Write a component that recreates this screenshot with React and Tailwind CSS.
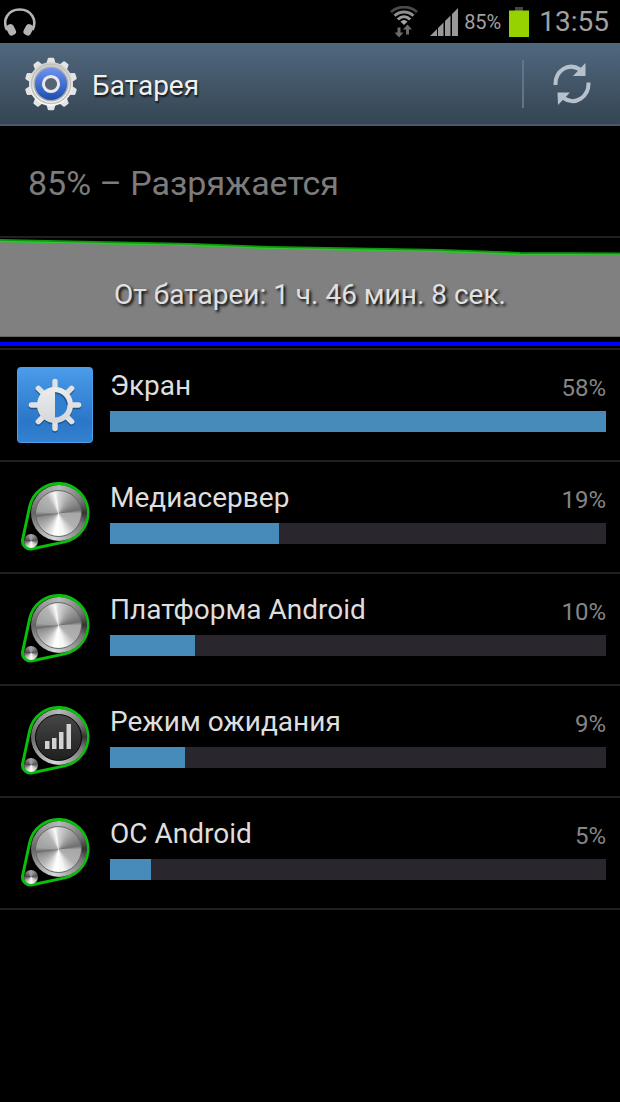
import React from 'react';

const usage = [
    { id: 'screen', name: 'Экран', percent: 58, icon: 'screen' },
    { id: 'media', name: 'Медиасервер', percent: 19.8, icon: 'knob' },
    { id: 'platform', name: 'Платформа Android', percent: 9.9, shown: 10, icon: 'knob' },
    { id: 'idle', name: 'Режим ожидания', percent: 8.8, shown: 9, icon: 'signal' },
    { id: 'os', name: 'ОС Android', percent: 4.8, shown: 5, icon: 'knob' },
];

const maxPercent = Math.max(...usage.map((item) => item.percent));

const HeadphonesIcon = () => (
    <svg className="w-8 h-8" viewBox="0 0 32 32" aria-hidden="true">
        <path d="M3 24C-2 14 4 3.500 15.700 3.500S33.500 14 28.500 24" fill="none" stroke="#b4b4b4" strokeWidth="2.600" />
        <rect x="3.300" y="18" width="7.800" height="11.500" rx="3.400" transform="rotate(-28 7.200 24)" fill="#b4b4b4" />
        <rect x="20.400" y="18" width="7.800" height="11.500" rx="3.400" transform="rotate(28 24.300 24)" fill="#b4b4b4" />
    </svg>
);

const WifiIcon = () => (
    <svg className="w-7 h-8" viewBox="0 0 28 32" aria-hidden="true">
        <g fill="none" strokeWidth="2.800">
            <path d="M1 6C8 -.500 20 -.500 27 6" stroke="#4a4a4a" />
            <path d="M4.500 9.800C10 4.700 18 4.700 23.500 9.800" stroke="#8e8e8e" />
            <path d="M7.800 13.500C11.500 9.800 16.500 9.800 20.200 13.500" stroke="#9c9c9c" />
        </g>
        <path d="M10.500 15.500Q14 12.500 17.500 15.500L14 19Z" fill="#a6a6a6" />
        <path d="M7.500 21.500h3v5h3l-4.500 5-4.500-5h3zM16 28.500v-5h-3l4.500-5 4.500 5h-3v5z" fill="#6b6b6b" />
    </svg>
);

const SignalIcon = () => (
    <svg className="w-7 h-7" viewBox="0 0 28 28" aria-hidden="true">
        <path d="M0 28L7 21V28ZM8 20L13.500 14.500V28H8ZM15 13L20.500 7.500V28H15ZM22 6L28 0V28H22Z" fill="#999" />
    </svg>
);

const BatteryIcon = () => (
    <svg className="w-5 h-[30px]" viewBox="0 0 20 30" aria-hidden="true">
        <rect x="6" width="8" height="4" fill="#444" />
        <rect y="3.500" width="20" height="26.500" fill="#96d200" />
    </svg>
);

const teeth = Array.from({ length: 10 }, (_, i) => i * 36);

const GearIcon = () => (
    <svg className="w-[54px] h-[54px]" viewBox="0 0 54 54" aria-hidden="true">
        <defs>
            <linearGradient id="gearMetal" x1="0" y1="0" x2="0" y2="1">
                <stop offset="0" stopColor="#cfcfcf" />
                <stop offset="1" stopColor="#fafafa" />
            </linearGradient>
            <linearGradient id="gearBlue" x1="0" y1="0" x2="0" y2="1">
                <stop offset="0" stopColor="#6d92f2" />
                <stop offset="1" stopColor="#1d4fae" />
            </linearGradient>
        </defs>
        {teeth.map((angle) => (
            <path key={angle} d="M22 8L23.800 1.500Q24 .700 25 .700H29Q30 .700 30.200 1.500L32 8Z" fill="#e4e4e4" transform={`rotate(${angle} 27 27)`} />
        ))}
        <circle cx="27" cy="27" r="22" fill="url(#gearMetal)" />
        <circle cx="27" cy="27" r="19.500" fill="none" stroke="#c0c0c0" strokeWidth="1.500" />
        <circle cx="27" cy="27" r="17.500" fill="#a9aaad" />
        <circle cx="27" cy="27" r="16" fill="url(#gearBlue)" />
        <circle cx="27" cy="27" r="7.600" fill="#566373" stroke="#e8e8ec" strokeWidth="3" />
    </svg>
);

const RefreshIcon = () => (
    <svg className="w-10 h-[42px]" viewBox="0 0 40 42" aria-hidden="true">
        <g fill="none" stroke="#b7c1cb" strokeWidth="4">
            <path d="M3.500 22C3 8 16 -1 28 6.500" />
            <path d="M36.500 19.500C37 34 23 43 11.500 35" />
        </g>
        <path d="M33.500 0V13H21ZM6 42L5.500 29.500H18Z" fill="#b7c1cb" />
    </svg>
);

const rays = [0, 45, 90, 135, 180, 225, 270, 315];

const ScreenIcon = () => (
    <svg className="w-[76px] h-[76px]" viewBox="0 0 76 76" aria-hidden="true">
        <defs>
            <linearGradient id="tile" x1="0" y1="0" x2="0" y2="1">
                <stop offset="0" stopColor="#4b9ceb" />
                <stop offset=".72" stopColor="#2a76c8" />
                <stop offset="1" stopColor="#3582d2" />
            </linearGradient>
            <linearGradient id="sun" gradientUnits="userSpaceOnUse" x1="0" y1="12" x2="0" y2="64">
                <stop offset="0" stopColor="#f2f2f2" />
                <stop offset="1" stopColor="#cfd1d4" />
            </linearGradient>
        </defs>
        <rect x=".5" y=".5" width="75" height="75" rx="3" fill="url(#tile)" stroke="#4f9fe8" />
        <g stroke="#1f5288" strokeWidth="5.500" strokeLinecap="round">
            {rays.map((angle) => (
                <path key={angle} d="M38 39.500V16" transform={`rotate(${angle} 38 39.500)`} />
            ))}
        </g>
        <circle cx="38" cy="39.500" r="18" fill="#1f5288" />
        <g stroke="#e0e1e3" strokeWidth="5.500" strokeLinecap="round">
            {rays.map((angle) => (
                <path key={angle} d="M38 38V14.500" transform={`rotate(${angle} 38 38)`} />
            ))}
        </g>
        <circle cx="38" cy="38" r="18" fill="url(#sun)" />
        <path d="M38 25.500A12.500 12.500 0 0 1 38 50.500Z" fill="#3180d2" />
        <path d="M38 26A12.500 12.500 0 0 1 50 38" fill="none" stroke="#245c96" strokeWidth="1.500" />
    </svg>
);

const KnobIcon = ({ signal }) => (
    <svg className="w-[76px] h-[76px]" viewBox="0 0 76 76" aria-hidden="true">
        <path d="M12.650 27.800A29.500 29.500 0 1 1 47.700 62.850L15.200 69.800A8 8 0 0 1 5.700 60.300Z" fill="#000" stroke="#0abe0a" strokeWidth="3" />
        <foreignObject x="13.500" y="6" width="56" height="56">
            <div className="w-full h-full rounded-full bg-[conic-gradient(#b8b8b8,#777_60deg,#333_90deg,#777_115deg,#aaa_160deg,#d8d8d8_190deg,#999_235deg,#666_270deg,#909090_310deg,#b8b8b8)]" />
        </foreignObject>
        <foreignObject x="18" y="10.500" width="47" height="47">
            {signal ? (
                <div className="w-full h-full rounded-full border border-black bg-linear-to-b from-[#464646] to-[#202020]" />
            ) : (
                <div className="w-full h-full rounded-full border border-[#666] bg-[conic-gradient(#d5d5d5,#a5a5a5_35deg,#707070_80deg,#a8a8a8_90deg,#b0b0b0_130deg,#f5f5f5_165deg,#fff_190deg,#bababa_225deg,#8c8c8c_258deg,#6c6c6c_264deg,#a0a0a0_275deg,#b5b5b5_325deg,#fafafa_350deg,#d5d5d5)]" />
            )}
        </foreignObject>
        {signal && <path d="M28 38h4.500v8H28zM35 35h4.500v11H35zM42 29h4.500v17H42zM49.500 21h4.500v25h-4.500z" fill="#d2d2d2" />}
        <foreignObject x="6.500" y="55" width="14" height="14">
            <div className="w-full h-full rounded-full bg-[conic-gradient(#aaa,#555_80deg,#ccc_130deg,#fff_180deg,#bbb_225deg,#444_280deg,#aaa)]" />
        </foreignObject>
    </svg>
);

const UsageRow = ({ item }) => (
    <li className="border-b-2 border-[#202020]">
        <button type="button" className="flex w-full pl-[17px] pr-[14px] py-[17px] gap-[17px] text-left">
            <span className="shrink-0">
                {item.icon === 'screen' ? <ScreenIcon /> : <KnobIcon signal={item.icon === 'signal'} />}
            </span>
            <span className="flex-1 flex flex-col gap-[7px]">
                <span className="flex items-end justify-between h-[37px] text-[28px] leading-9 text-[#dedede]">
                    <span>{item.name}</span>
                    <span className="text-2xl leading-8 text-[#858585]">{item.shown || Math.floor(item.percent)}%</span>
                </span>
                <span className="block h-[21px] bg-[#29272d]">
                    <span className="block h-full bg-[#468bb9]" style={{ width: `${(item.percent / maxPercent) * 100}%` }} />
                </span>
            </span>
        </button>
    </li>
);

const BatteryChart = () => (
    <section className="grid h-28 border-b-2 border-[#202020]">
        <svg className="col-start-1 row-start-1 w-full h-[110px]" viewBox="0 0 620 110" preserveAspectRatio="none" aria-hidden="true">
            <path d="M0 3L190 7L270 10L440 13L520 16L620 16V99H0Z" fill="#808080" />
            <path d="M0 98.500H620" stroke="#666" />
            <path d="M0 2.500L190 6.500L270 9.500L440 12.500L520 15.500L620 16" fill="none" stroke="#0b9a0b" strokeWidth="3" />
            <path d="M0 3.500L190 7.500L270 10.500L440 13.500L520 16.500L620 17" fill="none" stroke="#3cbe3c" strokeWidth="1.500" />
            <rect y="104" width="620" height="4" fill="#00f" />
        </svg>
        <p className="col-start-1 row-start-1 self-center pt-1 text-center text-[28px] leading-9 text-[#e0e0e0] [text-shadow:2px_2px_3px_#000]">
            От батареи: 1 ч. 46 мин. 8 сек.
        </p>
    </section>
);

export default function App() {
    return (
        <div className="min-h-screen bg-black font-['Roboto','Noto_Sans',sans-serif]">
            <div className="flex items-center justify-between h-[43px] pl-1 pr-[11px]">
                <HeadphonesIcon />
                <div className="flex items-center text-[#a0a0a0]">
                    <WifiIcon />
                    <span className="ml-3"><SignalIcon /></span>
                    <span className="ml-1.5 text-xl">85%</span>
                    <span className="ml-2"><BatteryIcon /></span>
                    <span className="ml-2.5 text-[28px]">13:55</span>
                </div>
            </div>

            <header className="flex items-center h-[83px] pl-6 border-b-2 border-[#46596a] bg-linear-to-b from-[#50687e] to-[#354553]">
                <GearIcon />
                <h1 className="ml-[14px] pt-1 text-[28px] leading-9 text-[#f0f0f0] [text-shadow:1px_2px_2px_#111]">Батарея</h1>
                <button type="button" aria-label="Обновить" className="ml-auto flex items-center justify-center h-12 w-[98px] border-l-2 border-[#61758a]">
                    <RefreshIcon />
                </button>
            </header>

            <main>
                <div className="flex items-center h-28 px-7 pt-1 border-b-2 border-[#202020]">
                    <h2 className="text-[34px] leading-10 text-[#7c7c7c]">85% – Разряжается</h2>
                </div>
                <BatteryChart />
                <ul>
                    {usage.map((item) => (
                        <UsageRow key={item.id} item={item} />
                    ))}
                </ul>
            </main>
        </div>
    );
}
